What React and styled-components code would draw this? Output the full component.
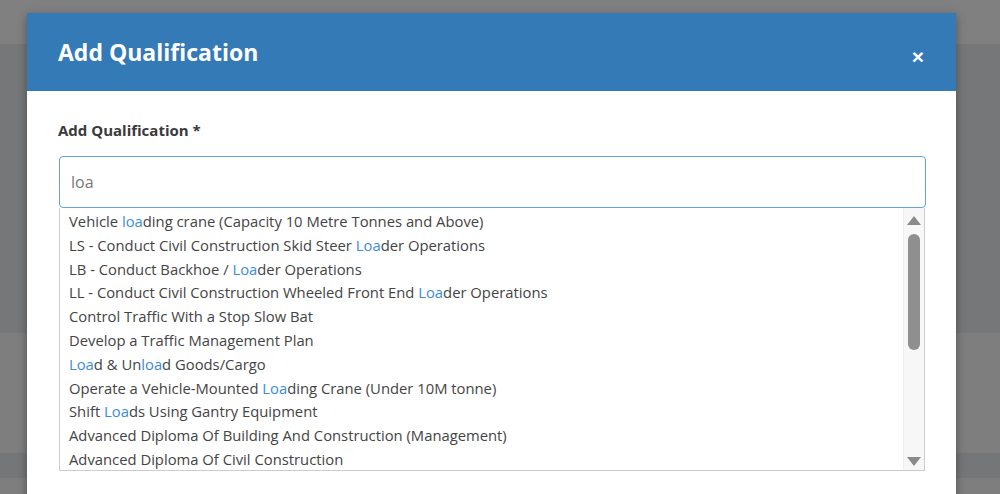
import React from "react";
import styled, { createGlobalStyle } from "styled-components";

const BLUE = "#337ab7";
const MATCH = "#3c8dd5";
const TEXT = "#444";

const GlobalStyle = createGlobalStyle`
  html, body {
    margin: 0;
    padding: 0;
    background: #7e7e7e;
  }
  * {
    box-sizing: border-box;
  }
`;

const Page = styled.div`
  position: relative;
  width: 1000px;
  height: 494px;
  overflow: hidden;
  font-family: "Open Sans", "Liberation Sans", sans-serif;
`;

const Band = styled.div`
  height: ${({ h }) => h}px;
  background: ${({ shade }) => shade};
`;

const Modal = styled.div`
  position: absolute;
  top: 13px;
  left: 27px;
  width: 929px;
  height: 500px;
  background: #fff;
  box-shadow: 0 3px 9px rgba(0, 0, 0, 0.35);
`;

const Header = styled.div`
  display: flex;
  align-items: flex-start;
  justify-content: space-between;
  height: 78px;
  padding: 24px 32px 0 31px;
  background: ${BLUE};
  color: #fff;
`;

const Title = styled.h4`
  margin: 0;
  font-size: 23px;
  font-weight: 700;
  line-height: 31px;
`;

const Close = styled.button`
  margin-top: 9px;
  padding: 0;
  border: 0;
  background: transparent;
  color: #fff;
  font-family: "Liberation Sans", Arial, sans-serif;
  font-size: 21px;
  font-weight: 700;
  line-height: 21px;
  cursor: pointer;
`;

const Body = styled.div`
  padding: 28px 31px 0 31px;
`;

const Label = styled.label`
  display: block;
  margin-bottom: 15px;
  color: #3a3a3a;
  font-size: 15px;
  font-weight: 700;
  line-height: 22px;
`;

const Input = styled.input`
  display: block;
  width: 867px;
  height: 52px;
  margin-left: 1px;
  padding: 0 11px;
  border: 1px solid #66a3da;
  border-radius: 4px;
  outline: none;
  color: #777;
  font-family: inherit;
  font-size: 16px;
`;

const Dropdown = styled.div`
  display: flex;
  width: 866px;
  height: 263px;
  margin-left: 1px;
  border: 1px solid #ccc;
  border-top: 0;
  background: #fff;
`;

const Options = styled.ul`
  flex: 1;
  margin: 0;
  padding: 2px 0 0 9px;
  list-style: none;
`;

const Option = styled.li`
  height: 23.8px;
  color: ${TEXT};
  font-size: 14.8px;
  line-height: 23.8px;
  white-space: nowrap;
`;

const Hit = styled.span`
  color: ${MATCH};
`;

const Scrollbar = styled.div`
  display: flex;
  flex-direction: column;
  align-items: center;
  width: 21px;
  background: #f7f7f7;
  border-left: 1px solid #efefef;
`;

const Arrow = styled.div`
  width: 0;
  height: 0;
  margin: ${({ up }) => (up ? "8px 0 9px" : "auto 0 4px")};
  border-left: 7px solid transparent;
  border-right: 7px solid transparent;
  ${({ up }) =>
    up ? "border-bottom: 9px solid #8a8a8a;" : "border-top: 9px solid #8a8a8a;"}
`;

const Thumb = styled.div`
  width: 12px;
  height: 116px;
  border-radius: 6px;
  background: #8f8f8f;
`;

const highlight = (text, query) => {
  const parts = [];
  const lower = text.toLowerCase();
  let i = 0;
  let at = lower.indexOf(query, i);
  while (at !== -1) {
    if (at > i) parts.push(text.slice(i, at));
    parts.push(<Hit key={at}>{text.slice(at, at + query.length)}</Hit>);
    i = at + query.length;
    at = lower.indexOf(query, i);
  }
  if (i < text.length) parts.push(text.slice(i));
  return parts;
};

const QUERY = "loa";

const QUALIFICATIONS = [
  "Vehicle loading crane (Capacity 10 Metre Tonnes and Above)",
  "LS - Conduct Civil Construction Skid Steer Loader Operations",
  "LB - Conduct Backhoe / Loader Operations",
  "LL - Conduct Civil Construction Wheeled Front End Loader Operations",
  "Control Traffic With a Stop Slow Bat",
  "Develop a Traffic Management Plan",
  "Load & Unload Goods/Cargo",
  "Operate a Vehicle-Mounted Loading Crane (Under 10M tonne)",
  "Shift Loads Using Gantry Equipment",
  "Advanced Diploma Of Building And Construction (Management)",
  "Advanced Diploma Of Civil Construction",
];

const App = () => (
  <>
    <GlobalStyle />
    <Page>
      <Band h={44} shade="#808080" />
      <Band h={289} shade="#767778" />
      <Band h={120} shade="#7e7e7e" />
      <Band h={25} shade="#757677" />
      <Band h={16} shade="#7e7e7e" />
      <Modal>
        <Header>
          <Title>Add Qualification</Title>
          <Close aria-label="Close">×</Close>
        </Header>
        <Body>
          <Label>Add Qualification *</Label>
          <Input defaultValue={QUERY} />
          <Dropdown>
            <Options>
              {QUALIFICATIONS.map((q) => (
                <Option key={q}>{highlight(q, QUERY)}</Option>
              ))}
            </Options>
            <Scrollbar>
              <Arrow up />
              <Thumb />
              <Arrow />
            </Scrollbar>
          </Dropdown>
        </Body>
      </Modal>
    </Page>
  </>
);

export default App;
